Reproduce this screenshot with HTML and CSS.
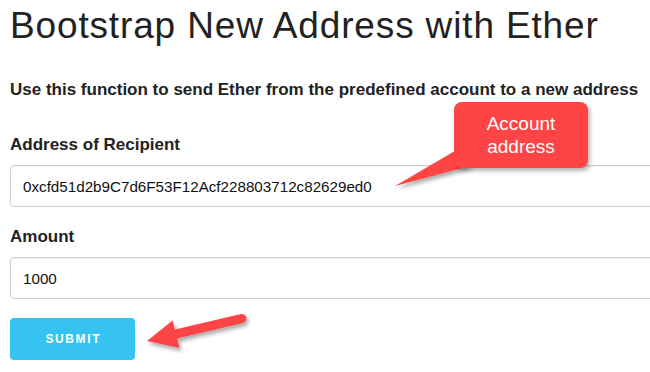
FILE: index.html
```html
<!DOCTYPE html>
<html>
<head>
<meta charset="utf-8">
<link rel="stylesheet" href="styles.css">
</head>
<body>
<div class="page">
  <h1 class="title">Bootstrap New Address with Ether</h1>
  <p class="lead">Use this function to send Ether from the predefined account to a new address</p>
  <div class="group first">
    <label class="label">Address of Recipient</label>
    <div class="input">0xcfd51d2b9C7d6F53F12Acf228803712c82629ed0</div>
  </div>
  <div class="group">
    <label class="label">Amount</label>
    <div class="input">1000</div>
  </div>
  <button class="submit">SUBMIT</button>

  <svg class="tail" width="650" height="372" viewBox="0 0 650 372">
    <defs>
      <filter id="sh" x="-20%" y="-20%" width="140%" height="140%">
        <feDropShadow dx="2" dy="3" stdDeviation="2" flood-color="#000" flood-opacity="0.35"/>
      </filter>
    </defs>
    <polygon points="460,148 395,186 470,166" fill="#fe4444" filter="url(#sh)"/>
    <g filter="url(#sh)" fill="#fe4444">
      <line x1="242" y1="318.5" x2="176" y2="334" stroke="#fe4444" stroke-width="9" stroke-linecap="round"/>
      <polygon points="147,341 172.5,320.5 179.5,348"/>
    </g>
  </svg>
  <div class="callout">Account<br>address</div>
</div>
</body>
</html>
```
FILE: styles.css
```css
html, body {
  margin: 0;
  padding: 0;
  background: #fff;
  overflow: hidden;
}
.page {
  position: relative;
  width: 650px;
  height: 372px;
  padding: 0 0 0 10px;
  box-sizing: border-box;
  overflow: hidden;
  font-family: "Liberation Sans", Arial, sans-serif;
  color: #222;
}
.title {
  margin: 6px 0 0;
  font-size: 37px;
  line-height: 40px;
  letter-spacing: 0.85px;
  font-weight: normal;
  color: #222;
  white-space: nowrap;
}
.lead {
  margin: 34px 0 0;
  font-size: 17px;
  line-height: 20px;
  font-weight: bold;
  white-space: nowrap;
}
.group {
  margin-top: 20px;
  display: flex;
  flex-direction: column;
}
.group.first {
  margin-top: 35px;
}
.label {
  font-size: 17px;
  line-height: 20px;
  font-weight: bold;
  margin-bottom: 10px;
}
.input {
  width: 700px;
  height: 42px;
  box-sizing: border-box;
  border: 1px solid #cfcfcf;
  border-radius: 4px;
  box-shadow: inset 0 1px 1px rgba(0,0,0,0.06);
  padding: 0 12px;
  font-size: 15.2px;
  display: flex;
  align-items: center;
  color: #111;
}
.submit {
  margin-top: 19px;
  width: 125px;
  height: 42px;
  border: none;
  border-radius: 4px;
  background: #36c3f1;
  color: #fff;
  font-family: "Liberation Sans", Arial, sans-serif;
  font-weight: bold;
  font-size: 12px;
  letter-spacing: 1.6px;
  padding: 0 0 0 1.6px;
  display: block;
}
.tail {
  position: absolute;
  left: 0;
  top: 0;
  pointer-events: none;
}
.callout {
  position: absolute;
  left: 454px;
  top: 102px;
  width: 134px;
  height: 66px;
  box-sizing: border-box;
  border-radius: 8px;
  background: #fe4444;
  box-shadow: 2px 3px 4px rgba(0,0,0,0.3);
  color: #fff;
  font-size: 19px;
  line-height: 23px;
  text-align: center;
  display: flex;
  align-items: center;
  justify-content: center;
}
```
